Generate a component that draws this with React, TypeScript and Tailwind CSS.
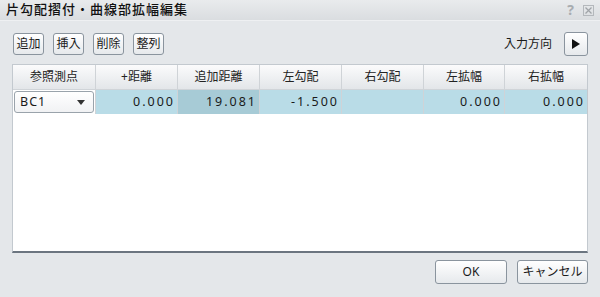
import React from "react";

const font = { fontFamily: '"Noto Sans", "Noto Sans CJK JP", sans-serif' };

function Btn({ children, className = "" }: { children: React.ReactNode; className?: string }) {
  return (
    <div
      className={
        "flex items-center justify-center rounded-[3px] border border-[#8a949e] bg-gradient-to-b from-[#ffffff] to-[#e6e9ec] text-[12px] text-[#1a1a1a] " +
        className
      }
    >
      {children}
    </div>
  );
}

const headers = ["参照測点", "+距離", "追加距離", "左勾配", "右勾配", "左拡幅", "右拡幅"];

const num = "flex items-center justify-end pr-[2px] text-[12.5px] tracking-[2px]";

export default function App() {
  return (
    <div className="w-[600px] h-[297px] bg-[#e4e7ea] flex flex-col text-[#1a1a1a]" style={font}>
      <div className="h-[21px] flex items-center justify-between pl-[6px] pr-[6px] bg-gradient-to-b from-[#e9ebed] to-[#dadde0] border-b border-[#eef0f2]">
        <span className="text-[13px] font-medium tracking-[1px] text-[#111]">片勾配摺付・曲線部拡幅編集</span>
        <div className="flex items-center gap-[9px] text-[#a8acb0]">
          <span className="text-[14px] font-bold leading-none">?</span>
          <svg width="11" height="11" viewBox="0 0 11 11">
            <rect x="0.5" y="0.5" width="10" height="10" fill="none" stroke="#b4b8bc" />
            <path d="M2.5 2.5 L8.5 8.5 M8.5 2.5 L2.5 8.5" stroke="#a0a4a8" strokeWidth="1.3" />
          </svg>
        </div>
      </div>
      <div className="flex items-center justify-between pl-[13px] pr-[12px] mt-[11px] h-[24px]">
        <div className="flex gap-[9px]">
          <Btn className="w-[31px] h-[22px]">追加</Btn>
          <Btn className="w-[31px] h-[22px]">挿入</Btn>
          <Btn className="w-[31px] h-[22px]">削除</Btn>
          <Btn className="w-[31px] h-[22px]">整列</Btn>
        </div>
        <div className="flex items-center gap-[12px]">
          <span className="text-[12px]">入力方向</span>
          <Btn className="w-[24px] h-[24px]">
            <svg width="10" height="10" viewBox="0 0 10 10">
              <path d="M1 0 L9 5 L1 10 Z" fill="#111" />
            </svg>
          </Btn>
        </div>
      </div>
      <div className="mx-[12px] mt-[8px] h-[189px] bg-white border border-[#c3c9cf] border-b-2 border-b-[#6b7580] flex flex-col">
        <div className="grid grid-cols-[83px_82px_82px_82px_82px_81px_82px] h-[25px] bg-gradient-to-b from-[#fbfbfc] to-[#e3e6e9] border-b border-[#d0d4d8]">
          {headers.map((h, i) => (
            <div
              key={h}
              className={"flex items-center justify-center text-[12px] text-[#222] " + (i < 6 ? "border-r border-[#cfd3d7]" : "")}
            >
              {h}
            </div>
          ))}
        </div>
        <div className="grid grid-cols-[83px_82px_82px_82px_82px_81px_82px] h-[24px] bg-[#b9dce7] text-[12px]">
          <div className="flex items-center pl-[1px] pr-[1px] bg-white border-r border-[#cfd3d7]">
            <div className="w-[81px] h-[22px] rounded-[3px] border border-[#9aa3ab] bg-gradient-to-b from-white to-[#f1f2f4] flex items-center justify-between pl-[5px] pr-[8px]">
              <span className="text-[12.5px] tracking-[1px]">BC1</span>
              <svg width="8" height="5" viewBox="0 0 8 5">
                <path d="M0 0 L8 0 L4 5 Z" fill="#333" />
              </svg>
            </div>
          </div>
          <div className={num + " border-r border-[#cfd3d7]"}>0.000</div>
          <div className={num + " bg-[#a7cbd6] border-r border-[#cfd3d7]"}>19.081</div>
          <div className={num + " border-r border-[#cfd3d7]"}>-1.500</div>
          <div className={num + " border-r border-[#cfd3d7]"}></div>
          <div className={num + " border-r border-[#cfd3d7]"}>0.000</div>
          <div className={num}>0.000</div>
        </div>
      </div>
      <div className="flex justify-end gap-[10px] pr-[12px] mt-[7px]">
        <Btn className="w-[72px] h-[24px]">OK</Btn>
        <Btn className="w-[71px] h-[24px]">キャンセル</Btn>
      </div>
    </div>
  );
}
